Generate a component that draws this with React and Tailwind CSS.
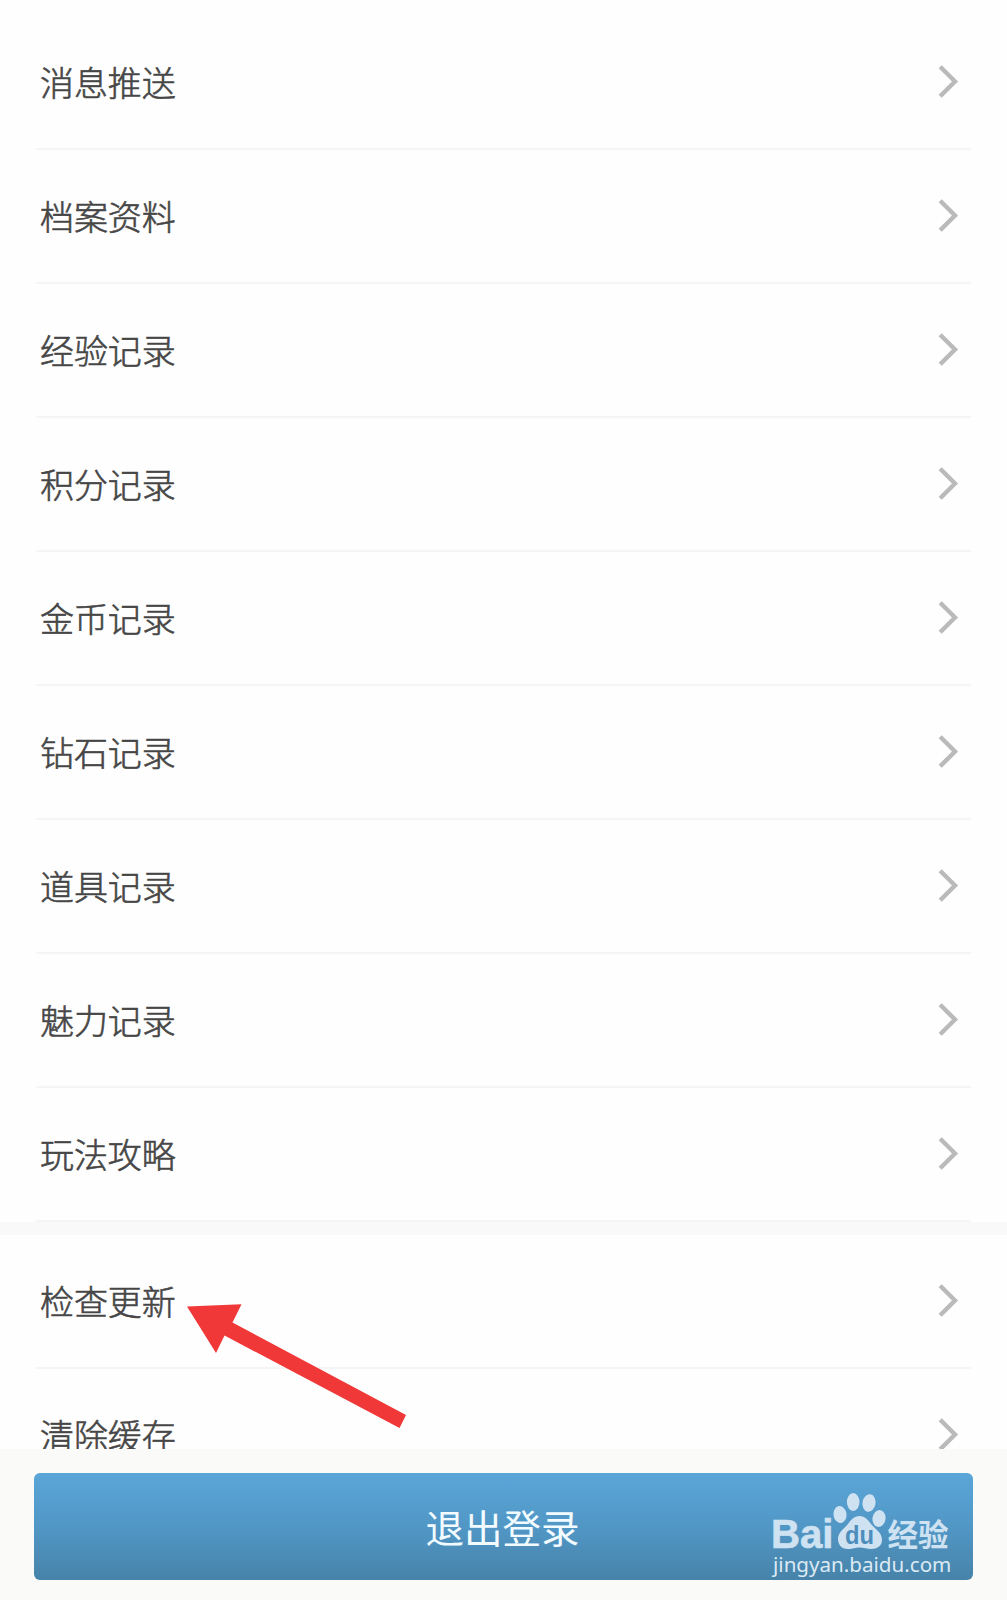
const RECORD_ITEMS = [
  "消息推送",
  "档案资料",
  "经验记录",
  "积分记录",
  "金币记录",
  "钻石记录",
  "道具记录",
  "魅力记录",
  "玩法攻略",
];

const SYSTEM_ITEMS = ["检查更新", "清除缓存"];

function Chevron() {
  return (
    <svg className="h-[34px] w-[22px]" viewBox="0 0 22 34" fill="none">
      <path d="M2.2 1.7 L17 16.5 L2.2 31.3" stroke="#bababa" strokeWidth="4.4" />
    </svg>
  );
}

function MenuRow({ label }) {
  return (
    <li className="mx-9 flex h-[134px] items-center justify-between border-b-2 border-[#f5f5f5] pl-[4px] pr-[11px]">
      <span className="text-[34px] leading-[50px] font-light tracking-[-0.1px] text-[#464646] [-webkit-text-stroke:0.6px_#464646]">
        {label}
      </span>
      <Chevron />
    </li>
  );
}

function Arrow() {
  return (
    <svg className="absolute left-[186px] top-[1302px] h-[130px] w-[224px]" viewBox="0 0 224 130">
      <path d="M1 4.5 L55.5 2.3 L46.5 20.5 L220 113 L213.5 126 L38.5 33.5 L30 51 Z" fill="#f03838" />
    </svg>
  );
}

function Watermark() {
  return (
    <svg
      className="absolute right-[18px] top-[3px] h-[87px] w-[186px]"
      viewBox="0 0 186 87"
      fill="#cfe2f1"
    >
      {/* paw */}
      <ellipse cx="71" cy="38.5" rx="6.5" ry="8.5" transform="rotate(-8 71 38.5)" />
      <ellipse cx="84.2" cy="26" rx="6.3" ry="9" />
      <ellipse cx="100" cy="27" rx="6.5" ry="8.8" transform="rotate(10 100 27)" />
      <ellipse cx="110" cy="42.5" rx="6.5" ry="8.5" transform="rotate(10 110 42.5)" />
      <path d="M90.5 40 C96 40 99 44 102 48 C106 53 113 56 113 64 C113 70 108 73 102 73 C98 73 95 71.5 90.5 71.5 C86 71.5 84 73 79 73 C72 73 69 68 69 63 C69 56 75 53 79 48 C82 44 85 40 90.5 40 Z" />
      <text x="76" y="67.5" fontSize="26" fontWeight="700" fill="#4d8ebd" fontFamily="Liberation Sans" textLength="29" lengthAdjust="spacingAndGlyphs">du</text>
      <text x="2" y="72" fontSize="40" fontWeight="700" fontFamily="Liberation Sans" stroke="#cfe2f1" strokeWidth="0.6" textLength="62.5" lengthAdjust="spacingAndGlyphs">Bai</text>
      <text x="118.5" y="69.5" fontSize="31" fontWeight="700" fontFamily="Noto Sans CJK SC" textLength="61" lengthAdjust="spacingAndGlyphs">经验</text>
    </svg>
  );
}

export default function App() {
  return (
    <div className="relative flex h-[1600px] w-full flex-col overflow-hidden bg-[#fefefe] font-['Noto_Sans_CJK_SC',sans-serif]">
      <main className="h-[1449px] shrink-0 overflow-hidden pt-[16px]">
        <ul>
          {RECORD_ITEMS.map((label) => (
            <MenuRow key={label} label={label} />
          ))}
        </ul>
        <div className="h-[13px] bg-[#f9f9f9]" />
        <ul>
          {SYSTEM_ITEMS.map((label) => (
            <MenuRow key={label} label={label} />
          ))}
        </ul>
      </main>

      <footer className="flex-1 bg-[#fafaf8] px-[34px] pt-[24px]">
        <button className="relative flex h-[107px] w-[939px] items-center justify-center rounded-[6px] bg-linear-to-b from-[#5aa6d8] via-[#5197c6] to-[#4783a9] text-[38.5px] text-[#f2fbff]">
          <span className="relative -left-px">退出登录</span>
          <Watermark />
          <span className="absolute left-[739px] top-[77px] text-[20.6px] leading-[28px] text-[#dceaf4] font-['Noto_Sans',sans-serif]">
            jingyan.baidu.com
          </span>
        </button>
      </footer>

      <Arrow />
    </div>
  );
}
